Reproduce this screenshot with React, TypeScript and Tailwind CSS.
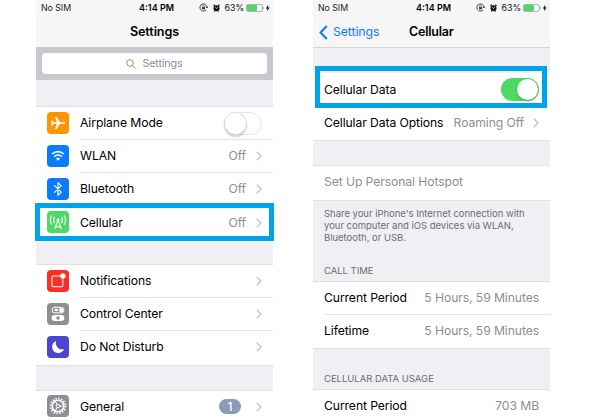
import React from "react";

type Kids = { children?: React.ReactNode };

function Chevron() {
  return (
    <svg className="h-[10px] w-[6px] shrink-0" viewBox="0 0 6 10" fill="none" stroke="#c4c4c9" strokeWidth="1.4">
      <path d="M0.8 0.8 5 5 0.8 9.2" />
    </svg>
  );
}

function StatusBar() {
  return (
    <div className="grid h-[15px] grid-cols-[1fr_auto_1fr] items-center pr-[3px] pl-[5px] text-[9px] leading-[15px]">
      <span className="text-[8.8px] tracking-[-0.05px] text-[#222]">No SIM</span>
      <span className="pl-[2px] text-[9px] font-semibold tracking-[0px]">4:14 PM</span>
      <div className="flex items-center justify-end text-[#111]">
        <svg className="mr-[5px] h-[9px] w-[9px]" viewBox="0 0 9 9" fill="none" stroke="#333" strokeWidth="0.9">
          <path d="M8.1 4.4A3.6 3.6 0 1 0 7.2 6.9M6.9 3.7 8 5 8.9 3.6" />
          <rect x="3" y="4.1" width="3" height="2.2" fill="#333" stroke="none" />
          <path d="M3.6 4.2V3.3a.9.9 0 0 1 1.8 0V4.2" strokeWidth="0.6" />
        </svg>
        <svg className="mr-[5px] h-[8px] w-[7px]" viewBox="0 0 7 8">
          <circle cx="3.5" cy="4.2" r="3" fill="#111" />
          <path d="M.4 1.9 1.9.6M6.6 1.9 5.1.6M1.3 7.5l.8-.9M5.7 7.5l-.8-.9" stroke="#111" strokeWidth="1.1" />
          <path d="M2.3 3.2 3.5 4.5 5 3.2" stroke="#fff" strokeWidth=".7" fill="none" />
        </svg>
        <span className="text-[8.9px] tracking-[-0.1px]">63%</span>
        <svg className="ml-[2px] h-[8px] w-[24px]" viewBox="0 0 24 8">
          <rect x=".4" y=".6" width="16" height="6.8" rx="1.4" fill="#fff" stroke="#8b8b8b" strokeWidth=".7" />
          <rect x="1" y="1.1" width="10" height="5.8" rx=".8" fill="#4cd964" />
          <path d="M17.4 2.7q1.4 1.3 0 2.6z" fill="#777" />
          <path d="M22.3.7 19.8 4.4h1.6L21 7.3 23.7 3.6h-1.7z" fill="#111" />
        </svg>
      </div>
    </div>
  );
}

function Tile({ color, children }: Kids & { color: string }) {
  return (
    <div className={`mr-[11px] mb-[2px] flex h-[22px] w-[22px] shrink-0 rounded-[4px] ${color}`}>
      <svg className="h-[22px] w-[22px]" viewBox="0 0 22 22" fill="none" stroke="#fff" strokeLinecap="round" strokeLinejoin="round">
        {children}
      </svg>
    </div>
  );
}

function Plane() {
  return (
    <Tile color="bg-[#ff9500]">
      <path
        d="M4 8.3h1l1.5 1.9h3.4L8 4.8h1.3l3.9 5.4h3.3c2.6 0 2.6 1.6 0 1.6h-3.3l-3.9 5.4H8l1.9-5.4H6.5L5 13.7H4l.7-2.7z"
        fill="#fff"
        stroke="none"
      />
    </Tile>
  );
}
function Wifi() {
  return (
    <Tile color="bg-[#0a7aff]">
      <path d="M5 9q6-4.8 12 0M7.2 11.5q3.8-3 7.6 0" strokeWidth="1.6" strokeLinecap="butt" />
      <path d="M8.9 13.5q2.1-1.6 4.2 0L11 15.8z" fill="#fff" stroke="none" />
    </Tile>
  );
}
function Bluetooth() {
  return (
    <Tile color="bg-[#0a7aff]">
      <path d="M7.5 7.7 14.2 14.2 11 17.3V4.7L14.2 7.8 7.5 14.3" strokeWidth="1.15" />
    </Tile>
  );
}
function Antenna() {
  return (
    <Tile color="bg-[#4cd964]">
      <path d="M7.6 17.6 11 9.2 14.4 17.6M8.8 14.6l4.9 2.2M13.2 14.6l-4.9 2.2" strokeWidth="1" />
      <circle cx="11" cy="9" r="1.5" fill="#fff" stroke="none" />
      <path d="M7.4 6.3q-1.7 2.8 0 5.6M4.7 4.8q-2.8 4.3 0 8.6M14.6 6.3q1.7 2.8 0 5.6M17.3 4.8q2.8 4.3 0 8.6" strokeWidth="1.15" />
    </Tile>
  );
}
function NotificationIcon() {
  return (
    <Tile color="bg-[#ff2d24]">
      <path d="M12.6 6H6.3Q5 6 5 7.3v8.2q0 1.3 1.3 1.3h8.2q1.3 0 1.3-1.3V9.2" strokeWidth="1.05" />
      <circle cx="15.8" cy="6" r="2.7" fill="#fff" stroke="none" />
    </Tile>
  );
}
function ControlIcon() {
  return (
    <Tile color="bg-[#8e8e93]">
      <rect x="5" y="4.3" width="12" height="5.6" rx="2.8" strokeWidth="1" />
      <circle cx="14.2" cy="7.1" r="2.2" fill="#fff" stroke="none" />
      <rect x="7.2" y="6.1" width="4" height="2" rx="1" fill="#fff" stroke="none" />
      <rect x="4.6" y="12" width="12.8" height="6" rx="3" fill="#fff" stroke="none" />
      <circle cx="11" cy="15" r="1.8" fill="#8e8e93" stroke="none" />
    </Tile>
  );
}
function Moon() {
  return (
    <Tile color="bg-[#4b45d1]">
      <path d="M9.2 5A6.2 6.2 0 1 0 17.1 13 6.2 6.2 0 0 1 9.2 5z" fill="#fff" stroke="none" />
    </Tile>
  );
}
function Gear() {
  return (
    <Tile color="bg-[#8e8e93]">
      <circle cx="11" cy="11" r="7.5" strokeWidth="1.7" strokeDasharray="1.45 1.495" strokeLinecap="butt" />
      <circle cx="11" cy="11" r="5.8" strokeWidth="1.6" />
      <circle cx="11" cy="11" r="1.8" strokeWidth=".9" />
      <path d="M12.8 11h3.8M10.1 9.4 8.2 6.1M10.1 12.6l-1.9 3.3" strokeWidth="1" />
    </Tile>
  );
}

function Row({
  icon,
  label,
  value,
  badge,
  last,
  children,
}: Kids & { icon: React.ReactNode; label: string; value?: string; badge?: string; last?: boolean }) {
  return (
    <div className="flex h-[33.2px] items-center bg-white pl-[11px]">
      {icon}
      <div className={`flex h-full flex-1 items-center justify-between border-b pr-[11px] ${last ? "border-transparent" : "border-[#e3e3e6]"}`}>
        <span>{label}</span>
        {children ?? (
          <div className="flex items-center">
            {value && <span className="mr-[10px] text-[#8e8e93]">{value}</span>}
            {badge && (
              <span className="mr-[15px] flex h-[15px] w-[22px] items-center justify-center rounded-full bg-[#8a9ab8] text-[12px] font-medium text-white">
                {badge}
              </span>
            )}
            <Chevron />
          </div>
        )}
      </div>
    </div>
  );
}

function Line({ label, value, divided, chevron, muted }: { label: string; value?: string; divided?: boolean; chevron?: boolean; muted?: boolean }) {
  return (
    <div className="h-[33.2px] bg-white pl-[11px]">
      <div className={`flex h-full items-center justify-between border-b pr-[11px] ${divided ? "border-[#e3e3e6]" : "border-transparent"}`}>
        <span className={muted ? "text-[#8e8e93]" : ""}>{label}</span>
        <div className="flex items-center gap-[9px] text-[#8e8e93]">
          {value}
          {chevron && <Chevron />}
        </div>
      </div>
    </div>
  );
}

function SettingsScreen() {
  return (
    <section className="relative ml-[36px] h-[420px] w-[237px] overflow-visible bg-white">
      <header className="h-[47px] bg-[#f6f6f7]">
        <StatusBar />
        <h1 className="pt-[7px] text-center text-[12.6px] leading-[20px] font-semibold tracking-[-0.1px]">Settings</h1>
      </header>
      <div className="h-[33px] bg-[#c9c8ce] px-[6px] pt-[6px]">
        <div className="flex h-[21px] items-center justify-center gap-[6px] rounded-[4px] bg-white text-[10.8px] tracking-[-0.15px] text-[#8e8e93]">
          <svg className="h-[10px] w-[10px]" viewBox="0 0 10 10" fill="none" stroke="#8e8e93" strokeWidth="1">
            <circle cx="4" cy="4" r="3.3" />
            <path d="m6.4 6.4 3.1 3.1" />
          </svg>
          Settings
        </div>
      </div>
      <div className="h-[27px] border-b border-[#dfdfe4] bg-[#efeff4]" />
      <Row icon={<Plane />} label="Airplane Mode">
        <div className="flex h-[23px] w-[38px] rounded-full border border-[#e5e5e5] bg-white">
          <div className="-mt-px -ml-px h-[23px] w-[23px] rounded-full border border-[#dedede] bg-white shadow-[0_2px_2px_rgba(0,0,0,0.18)]" />
        </div>
      </Row>
      <Row icon={<Wifi />} label="WLAN" value="Off" />
      <Row icon={<Bluetooth />} label="Bluetooth" value="Off" />
      <Row icon={<Antenna />} label="Cellular" value="Off" last />
      <div className="h-[25.2px] border-y border-[#dfdfe4] bg-[#efeff4]" />
      <Row icon={<NotificationIcon />} label="Notifications" />
      <Row icon={<ControlIcon />} label="Control Center" />
      <Row icon={<Moon />} label="Do Not Disturb" last />
      <div className="h-[26px] border-y border-[#dfdfe4] bg-[#efeff4]" />
      <div className="h-[29px] overflow-hidden">
        <Row icon={<Gear />} label="General" badge="1" last />
      </div>
      <div className="absolute top-[203px] -left-px h-[38px] w-[239px] border-[5px] border-[#00a2e8]" />
    </section>
  );
}

function CellularScreen() {
  return (
    <section className="relative ml-[40px] h-[420px] w-[237px] bg-white">
      <header className="h-[48px] border-b border-[#d4d4d8] bg-[#f6f6f7]">
        <StatusBar />
        <div className="flex h-[33px] items-center pt-px pl-[6px]">
          <div className="flex w-[90px] items-center gap-[5px] text-[12.3px] tracking-[-0.1px] text-[#0a7aff]">
            <svg className="h-[15px] w-[9px]" viewBox="0 0 9 15" fill="none" stroke="#0a7aff" strokeWidth="2">
              <path d="M7.8 1 1.5 7.5 7.8 14" />
            </svg>
            Settings
          </div>
          <h1 className="text-[12.5px] font-semibold tracking-[-0.2px]">Cellular</h1>
        </div>
      </header>
      <div className="h-[25px] bg-[#efeff4]" />
      <div className="flex h-[33.4px] items-center justify-between bg-white pr-[11px] pl-[11px]">
        <span>Cellular Data</span>
        <div className="flex h-[23px] w-[38px] justify-end rounded-full bg-[#4cd964] p-[1px]">
          <div className="h-[21px] w-[21px] rounded-full bg-white shadow-[0_1px_2px_rgba(0,0,0,0.3)]" />
        </div>
      </div>
      <div className="pt-[0.6px]">
        <Line label="Cellular Data Options" value="Roaming Off" chevron />
      </div>
      <div className="h-[26.2px] border-y border-[#e3e3e7] bg-[#efeff4]" />
      <Line label="Set Up Personal Hotspot" muted />
      <div className="h-[82.4px] border-y border-[#dfdfe4] bg-[#efeff4] pl-[11px] text-[9.5px] tracking-[-0.02px] text-[#6d6d72]">
        <p className="pt-[7px] leading-[12px] whitespace-nowrap">
          Share your iPhone&apos;s Internet connection with
          <br />
          your computer and iOS devices via WLAN,
          <br />
          Bluetooth, or USB.
        </p>
        <h2 className="pt-[21px] leading-[12px]">CALL TIME</h2>
      </div>
      <Line label="Current Period" value="5 Hours, 59 Minutes" divided />
      <Line label="Lifetime" value="5 Hours, 59 Minutes" />
      <div className="h-[42px] border-y border-[#dfdfe4] bg-[#efeff4] pt-[24px] pl-[11px] text-[9.5px] leading-[12px] tracking-[-0.02px] text-[#6d6d72]">
        CELLULAR DATA USAGE
      </div>
      <div className="h-[30px] overflow-hidden">
        <Line label="Current Period" value="703 MB" />
      </div>
      <div className="absolute top-[66px] left-[2px] h-[42px] w-[232px] border-[5px] border-[#00a2e8]" />
    </section>
  );
}

export default function App() {
  return (
    <main className="flex h-[420px] w-[600px] overflow-hidden bg-white font-['Inter','Liberation_Sans',sans-serif] text-[12.2px] leading-[18px] tracking-[-0.1px] text-black">
      <SettingsScreen />
      <CellularScreen />
    </main>
  );
}
